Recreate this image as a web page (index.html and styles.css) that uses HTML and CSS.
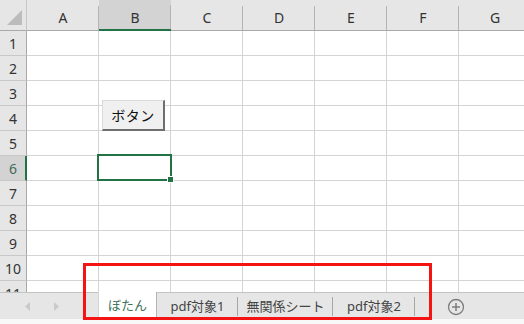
FILE: index.html
```html
<!DOCTYPE html>
<html lang="ja">
<head>
  <meta charset="UTF-8">
  <meta name="viewport" content="width=device-width, initial-scale=1.0">
  <title>Book1 - Excel</title>
  <link rel="stylesheet" href="styles.css">
</head>
<body>
  <div class="book">
    <div class="sheet">
      <div class="grid">
        <div class="corner"></div>
        <div class="col-head">A</div>
        <div class="col-head active">B</div>
        <div class="col-head">C</div>
        <div class="col-head">D</div>
        <div class="col-head">E</div>
        <div class="col-head">F</div>
        <div class="col-head">G</div>

        <div class="row-head">1</div><div class="cell"></div><div class="cell"></div><div class="cell"></div><div class="cell"></div><div class="cell"></div><div class="cell"></div><div class="cell"></div>
        <div class="row-head">2</div><div class="cell"></div><div class="cell"></div><div class="cell"></div><div class="cell"></div><div class="cell"></div><div class="cell"></div><div class="cell"></div>
        <div class="row-head">3</div><div class="cell"></div><div class="cell"></div><div class="cell"></div><div class="cell"></div><div class="cell"></div><div class="cell"></div><div class="cell"></div>
        <div class="row-head">4</div><div class="cell"></div><div class="cell"></div><div class="cell"></div><div class="cell"></div><div class="cell"></div><div class="cell"></div><div class="cell"></div>
        <div class="row-head">5</div><div class="cell"></div><div class="cell"></div><div class="cell"></div><div class="cell"></div><div class="cell"></div><div class="cell"></div><div class="cell"></div>
        <div class="row-head active">6</div><div class="cell"></div><div class="cell"></div><div class="cell"></div><div class="cell"></div><div class="cell"></div><div class="cell"></div><div class="cell"></div>
        <div class="row-head">7</div><div class="cell"></div><div class="cell"></div><div class="cell"></div><div class="cell"></div><div class="cell"></div><div class="cell"></div><div class="cell"></div>
        <div class="row-head">8</div><div class="cell"></div><div class="cell"></div><div class="cell"></div><div class="cell"></div><div class="cell"></div><div class="cell"></div><div class="cell"></div>
        <div class="row-head">9</div><div class="cell"></div><div class="cell"></div><div class="cell"></div><div class="cell"></div><div class="cell"></div><div class="cell"></div><div class="cell"></div>
        <div class="row-head">10</div><div class="cell"></div><div class="cell"></div><div class="cell"></div><div class="cell"></div><div class="cell"></div><div class="cell"></div><div class="cell"></div>
        <div class="row-head">11</div><div class="cell"></div><div class="cell"></div><div class="cell"></div><div class="cell"></div><div class="cell"></div><div class="cell"></div><div class="cell"></div>
      </div>

      <button class="form-btn">ボタン</button>
      <div class="selection"><span class="fill-handle"></span></div>
    </div>

    <div class="tabbar">
      <div class="tab-nav">
        <svg width="6" height="9" viewBox="0 0 6 9"><path d="M5 0 L0 4.5 L5 9 Z" fill="#c9c9c9"/></svg>
        <svg width="6" height="9" viewBox="0 0 6 9"><path d="M1 0 L6 4.5 L1 9 Z" fill="#c9c9c9"/></svg>
      </div>
      <div class="tab current">ぼたん</div>
      <div class="tab w81">pdf対象1</div>
      <div class="tab w95">無関係シート</div>
      <div class="tab w82">pdf対象2</div>
      <div class="add-sheet">
        <svg width="18" height="18" viewBox="0 0 18 18">
          <circle cx="9" cy="9" r="7.5" fill="none" stroke="#7d7d7d" stroke-width="1.3"/>
          <path d="M9 5 V13 M5 9 H13" stroke="#7d7d7d" stroke-width="1.5"/>
        </svg>
      </div>
    </div>
    <div class="status-gap"></div>

    <div class="callout"></div>
  </div>
</body>
</html>
```

FILE: styles.css
```css
body {
  margin: 0;
  padding: 0;
  background: #fff;
  font-family: "Noto Sans", "Noto Sans CJK JP", sans-serif;
  color: #444;
  overflow: hidden;
}
.book {
  position: relative;
  width: 524px;
  height: 324px;
  overflow: hidden;
}
.sheet {
  position: relative;
  height: 292px;
  overflow: hidden;
}
.grid {
  display: grid;
  grid-template-columns: 27px repeat(7, 72px);
  grid-template-rows: 31px repeat(11, 25px);
}
.grid > div {
  box-sizing: border-box;
}
.corner {
  background: #e6e6e6;
  border-bottom: 1px solid #a9a9a9;
  border-right: 1px solid #c6c6c6;
  display: flex;
  justify-content: flex-end;
  align-items: flex-end;
  padding: 0 4px 5px 0;
}
.corner::after {
  content: "";
  width: 0;
  height: 0;
  border-left: 15px solid transparent;
  border-bottom: 15px solid #bcbcbc;
}
.col-head {
  background: #e6e6e6 linear-gradient(#b4b4b4, #b4b4b4) no-repeat right bottom / 1px 24px;
  border-bottom: 1px solid #a9a9a9;
  display: flex;
  justify-content: center;
  align-items: center;
  padding-top: 5px;
  font-size: 14px;
  color: #333;
}
.col-head.active {
  background-color: #d3d3d3;
  border-bottom: 2px solid #217346;
  padding-top: 6px;
}
.row-head {
  background: #e6e6e6;
  border-right: 1px solid #a9a9a9;
  border-bottom: 1px solid #c8c8c8;
  display: flex;
  justify-content: center;
  align-items: center;
  font-size: 14px;
  color: #333;
}
.row-head.active {
  background: #d3d3d3;
  border-right: 2px solid #217346;
  color: #3f6b58;
  padding-left: 1px;
}
.cell {
  background: #fff;
  border-right: 1px solid #d4d4d4;
  border-bottom: 1px solid #d4d4d4;
}
.form-btn {
  position: absolute;
  left: 102px;
  top: 100px;
  width: 63px;
  height: 31px;
  box-sizing: border-box;
  margin: 0;
  padding: 0 0 1px;
  background: #f0f0f0;
  border-top: 1px solid #dadada;
  border-left: 1px solid #dadada;
  border-right: 2px solid #6e6e6e;
  border-bottom: 2px solid #6e6e6e;
  font-family: "Noto Sans CJK JP", sans-serif;
  font-size: 14px;
  letter-spacing: 0.5px;
  color: #111;
}
.selection {
  position: absolute;
  left: 97px;
  top: 154px;
  width: 75px;
  height: 27px;
  box-sizing: border-box;
  border: 2px solid #217346;
}
.fill-handle {
  position: absolute;
  right: -4px;
  bottom: -4px;
  width: 5px;
  height: 5px;
  background: #217346;
  border: 1px solid #fff;
}
.tabbar {
  display: flex;
  align-items: stretch;
  height: 26px;
  background: #e6e6e6;
  border-top: 1px solid #c3c3c3;
}
.tab-nav {
  width: 98px;
  display: flex;
  align-items: center;
  gap: 22px;
  padding-left: 25px;
  box-sizing: border-box;
}
.tab {
  display: flex;
  align-items: center;
  justify-content: center;
  box-sizing: border-box;
  font-family: "Noto Sans", "Noto Sans CJK JP", sans-serif;
  font-size: 13px;
  color: #444;
  padding-bottom: 1px;
  background: linear-gradient(#a6a6a6, #a6a6a6) no-repeat right 4px / 1px 19px;
}
.tab.current {
  width: 59px;
  margin-top: -1px;
  background: #fff;
  border-left: 1px solid #d4d4d4;
  border-right: 1px solid #b4b4b4;
  border-bottom: 2px solid #217346;
  color: #3d7357;
  font-family: "Noto Sans CJK JP", sans-serif;
}
.w81 { width: 81px; }
.w95 { width: 95px; }
.w82 { width: 82px; }
.add-sheet {
  display: flex;
  align-items: center;
  margin-left: 32px;
  padding-top: 1px;
}
.status-gap {
  height: 5px;
  background: #f8f8f8;
}
.callout {
  position: absolute;
  left: 83px;
  top: 263px;
  width: 349px;
  height: 57px;
  box-sizing: border-box;
  border: 3px solid #f41414;
  pointer-events: none;
}
```
